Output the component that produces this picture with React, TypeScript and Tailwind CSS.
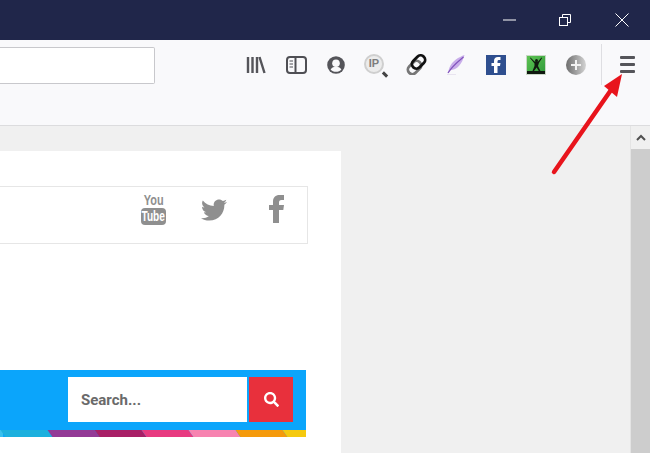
import React from 'react';
import { FaTwitter, FaSearch } from 'react-icons/fa';

const Slot: React.FC<{ children: React.ReactNode }> = ({ children }) => (
  <div className="w-10 h-6 flex items-center justify-center shrink-0">{children}</div>
);

const LibraryIcon = () => (
  <svg width="20" height="18" viewBox="0 0 20 18" fill="none" stroke="#55555a" strokeWidth="2.4">
    <path d="M2 1v16M6.500 1v16M11 1v16M13.500 1l5 16" />
  </svg>
);

const SidebarIcon = () => (
  <svg width="21" height="18" viewBox="0 0 21 18" fill="none" stroke="#4f4f54">
    <rect x="1" y="1" width="19" height="16" rx="3" strokeWidth="2" />
    <path d="M9.500 1v16" strokeWidth="2" />
    <path d="M3.500 5h3.500M3.500 8h3.500M3.500 11h3.500" strokeWidth="1.200" />
  </svg>
);

const AccountIcon = () => (
  <svg width="18" height="18" viewBox="0 0 18 18">
    <circle cx="9" cy="9" r="8.800" fill="#55555a" />
    <circle cx="9" cy="7.200" r="3.800" fill="#f9f9fb" />
    <path d="M3.600 13.400c1.200-1.900 3.200-2.600 5.400-2.600s4.200.7 5.400 2.600c-1.300 1.500-3.200 2.400-5.400 2.400s-4.100-.9-5.400-2.400z" fill="#f9f9fb" />
  </svg>
);

const IpIcon = () => (
  <div className="relative w-[24px] h-[24px] translate-y-[1px]">
    <div className="w-[20px] h-[20px] rounded-full border-[2px] border-[#cfcfcf] bg-[#ececec] flex items-center justify-center text-[11px] font-bold text-[#7d7d7d] [font-family:'Liberation_Sans',sans-serif]">
      IP
    </div>
    <div className="absolute right-[0px] bottom-[2px] w-[6px] h-[3px] bg-[#444] rotate-45" />
  </div>
);

const LinkIcon = () => (
  <svg width="21" height="21" viewBox="0 0 21 21" fill="none" strokeWidth="2.800">
    <rect x="1" y="9" width="15" height="9" rx="4.500" transform="rotate(-45 8.500 13.500)" stroke="#777" />
    <rect x="5" y="3.500" width="15" height="9" rx="4.500" transform="rotate(-45 12.500 8)" stroke="#111" />
  </svg>
);

const QuillIcon = () => (
  <svg width="20" height="20" viewBox="0 0 20 20">
    <path d="M18.500 0C13 2 6 6 3.500 12.500L1.500 18.500l3-3.500C11 15 16 9 18.500 0z" fill="#c9aeea" />
    <path d="M17.500 2C13 6 7 10 2 18" fill="none" stroke="#8254bd" strokeWidth="1.200" />
    <path d="M1 19.500h9" stroke="#e9e4f0" strokeWidth="1" />
  </svg>
);

const FbBadge = () => (
  <div className="w-5 h-5 bg-[#2f4f8f] flex items-center justify-center">
    <svg width="10" height="16" viewBox="0 0 10 16" fill="#fff">
      <path d="M3 16V9H.5V6H3V4c0-2.500 1.500-4 4-4h2.500v3H8C7 3 6.500 3.500 6.500 4.500V6h3l-.5 3H6.500v7z" />
    </svg>
  </div>
);

const GreenBadge = () => (
  <div className="w-5 h-5 bg-gradient-to-br from-[#5cc352] to-[#2f9a3a] border border-[#c9d8c6] flex items-center justify-center">
    <svg width="18" height="18" viewBox="0 0 18 18" fill="#10180f">
      <rect x="0" y="15" width="18" height="3" />
      <circle cx="9.500" cy="4.500" r="1.500" />
      <path d="M3.500 1.500l4 4h3.500l3.500-4 .6.500-3.200 5-.9 3 2.500 5h-1.700l-2.200-3.500L7 15H5.500l2-5V7.500L3 2z" />
    </svg>
  </div>
);

const PlusBadge = () => (
  <div className="w-5 h-5 rounded-full bg-gradient-to-r from-[#6f6f6f] to-[#d4d4d4] flex items-center justify-center">
    <svg width="10" height="10" viewBox="0 0 10 10" stroke="#f4f4f4" strokeWidth="2">
      <path d="M5 0v10M0 5h10" />
    </svg>
  </div>
);

const YouTubeLogo = () => (
  <div className="w-[25px] flex flex-col items-center text-[#8f8f8f] font-bold [font-family:'Liberation_Sans',sans-serif]">
    <span className="text-[14px] leading-[14px] h-[14px] scale-x-[0.78] -translate-y-[1px]">You</span>
    <span className="w-[25px] h-[17px] rounded-[4px] bg-[#8f8f8f] text-white text-[14px] leading-[17px] flex justify-center">
      <span className="inline-block scale-x-[0.72] whitespace-nowrap">Tube</span>
    </span>
  </div>
);

const stripes = ['bg-[#1db0de]', 'bg-[#933a96]', 'bg-[#a81f66]', 'bg-[#e83a80]', 'bg-[#f783b0]', 'bg-[#f59a0b]', 'bg-[#f5c90f]'];

export default function App() {
  return (
    <div className="w-[650px] h-[453px] overflow-hidden relative flex flex-col bg-[#f0f0f0] [font-family:'Roboto','Liberation_Sans',sans-serif]">
      {/* window title bar */}
      <div className="h-10 bg-[#20264a] flex items-center justify-end shrink-0">
        <div className="w-[57px] h-10 flex items-center justify-center translate-x-[2px]">
          <svg width="13" height="2" viewBox="0 0 13 2"><path d="M0 1h13" stroke="#fff" strokeWidth="1" /></svg>
        </div>
        <div className="w-[57px] h-10 flex items-center justify-center">
          <svg width="12" height="12" viewBox="0 0 12 12" fill="none" stroke="#fff" strokeWidth="1">
            <rect x="0.500" y="3.500" width="8" height="8" />
            <path d="M3.500 3.500v-3h8v8h-3" />
          </svg>
        </div>
        <div className="w-[57px] h-10 flex items-center justify-center">
          <svg width="14" height="14" viewBox="0 0 14 14" fill="none" stroke="#fff" strokeWidth="1">
            <path d="M0.500 0.500l13 13M13.500 0.500l-13 13" />
          </svg>
        </div>
      </div>

      {/* browser toolbar */}
      <div className="h-[86px] shrink-0 bg-[#f9f9fb] border-b border-[#dcdcde]">
        <div className="flex items-start pt-[7px]">
          <div className="w-[155px] h-[37px] bg-white border border-[#c8c8cc] rounded-r-[2px] border-l-0 shrink-0" />
          <div className="ml-[81px] flex items-center h-[37px] -mt-[1px]">
            <Slot><LibraryIcon /></Slot>
            <Slot><SidebarIcon /></Slot>
            <Slot><AccountIcon /></Slot>
            <Slot><IpIcon /></Slot>
            <Slot><LinkIcon /></Slot>
            <Slot><QuillIcon /></Slot>
            <Slot><FbBadge /></Slot>
            <Slot><GreenBadge /></Slot>
            <Slot><PlusBadge /></Slot>
            <div className="w-px h-[41px] bg-[#dedee2] ml-[5px]" />
            <div className="ml-[18px] flex flex-col gap-[4px]">
              <div className="w-[15px] h-[3px] bg-[#55555a] rounded-[1px]" />
              <div className="w-[15px] h-[3px] bg-[#55555a] rounded-[1px]" />
              <div className="w-[15px] h-[3px] bg-[#55555a] rounded-[1px]" />
            </div>
          </div>
        </div>
      </div>

      <div className="flex-1 flex min-h-0">
        {/* page */}
        <div className="flex-1 pt-[25px]">
          <div className="w-[341px] h-full bg-white pt-[35px]">
            <div className="w-[308px] h-[58px] border border-l-0 border-[#e6e6e6] flex items-start pt-[7px]">
              <div className="ml-[141px]"><YouTubeLogo /></div>
              <FaTwitter className="ml-[34px] mt-[3px] w-[28px] h-[26px] text-[#8f8f8f]" />
              <svg className="ml-[41px] mt-[1px]" width="15" height="28" viewBox="0 0 15 28" fill="#8f8f8f">
                <path d="M4 28V15H0v-5h4V6.500C4 2.500 6.500 0 10.500 0H15v5h-2.500C10.500 5 10 6 10 7.500V10h5l-.7 5H10v13z" />
              </svg>
            </div>

            <div className="w-[306px] mt-[126px] h-[67px] bg-[#0ba5fb] flex flex-col">
              <div className="flex justify-end pt-[7px] pr-[13px]">
                <div className="w-[179px] h-[45px] bg-white flex items-center pl-[13px] pt-[1px] text-[15px] font-bold text-[#6a6a6a]">
                  Search...
                </div>
                <div className="ml-[2px] w-[44px] h-[45px] bg-[#e8303c] flex items-center justify-center text-white">
                  <FaSearch className="w-[15px] h-[15px]" />
                </div>
              </div>
              <div className="mt-auto h-[7px] flex overflow-hidden">
                <div className="w-[3px] shrink-0 bg-[#38c0ee]" />
                {stripes.map((c) => (
                  <div key={c} className={`w-[47px] shrink-0 skew-x-[35deg] ${c}`} />
                ))}
              </div>
            </div>
          </div>
        </div>

        {/* scrollbar */}
        <div className="w-[20px] shrink-0 flex flex-col border-l border-[#e4e4e4]">
          <div className="h-[23px] bg-[#f0f0f0] flex items-center justify-center">
            <svg width="10" height="7" viewBox="0 0 10 7" fill="none" stroke="#505050" strokeWidth="2">
              <path d="M1 6l4-4 4 4" />
            </svg>
          </div>
          <div className="flex-1 bg-[#cdcdcd]" />
        </div>
      </div>

      {/* red annotation arrow */}
      <svg className="absolute left-[545px] top-[68px]" width="80" height="112" viewBox="0 0 80 112" fill="none">
        <path d="M9 104L66 22" stroke="#e8141c" strokeWidth="4.500" strokeLinecap="round" />
        <path d="M77 6L59 18L72 29Z" fill="#e8141c" />
      </svg>
    </div>
  );
}
